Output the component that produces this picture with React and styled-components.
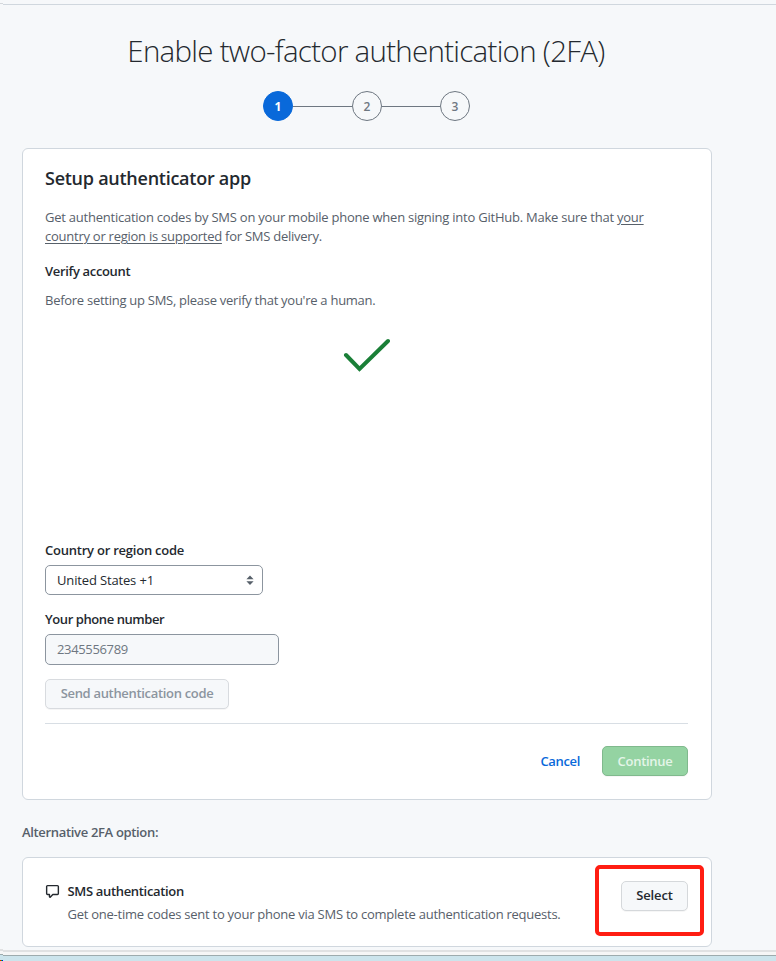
import React from 'react';
import styled, { createGlobalStyle } from 'styled-components';

const GlobalStyle = createGlobalStyle`
  *, *::before, *::after { box-sizing: border-box; }
  html, body { margin: 0; padding: 0; overflow: hidden; background: #f6f8fa; }
  body {
    font-family: "Open Sans", "Noto Sans", sans-serif;
    font-size: 13px;
    line-height: 19px;
    color: #24292f;
  }
  h1, h2, h3, p { margin: 0; }
  button, input { font-family: inherit; font-size: 13px; margin: 0; }
`;

const Page = styled.div`
  display: flex;
  flex-direction: column;
  width: 776px;
  height: 961px;
  overflow: hidden;
`;

const TopEdge = styled.div`
  display: flex;
  height: 5px;
  flex: none;
`;

const TopEdgeStub = styled.div`
  width: 3px;
  height: 4px;
  border-bottom: 1px solid #d4d8dc;
`;

const TopEdgeLine = styled.div`
  flex: 1;
  border-bottom: 1px solid #d0d7de;
`;

const Content = styled.main`
  display: flex;
  flex-direction: column;
  width: 690px;
  height: 942px;
  margin-left: 22px;
  flex: none;
`;

const Title = styled.h1`
  height: 44px;
  margin-top: 24px;
  padding-right: 2px;
  font-size: 29.5px;
  line-height: 44px;
  font-weight: 300;
  text-align: center;
  white-space: nowrap;
  letter-spacing: -0.72px;
`;

const Steps = styled.div`
  display: flex;
  align-items: center;
  justify-content: center;
  height: 30px;
  margin: 18px 0 27px;
  padding-right: 1px;
`;

const Step = styled.div`
  display: flex;
  align-items: center;
  justify-content: center;
  width: 30px;
  height: 30px;
  border-radius: 50%;
  border: 1px solid ${(p) => (p.$active ? '#0969da' : '#6e7781')};
  background: ${(p) => (p.$active ? '#0969da' : 'transparent')};
  color: ${(p) => (p.$active ? '#ffffff' : '#6e7781')};
  font-size: 12px;
  font-weight: ${(p) => (p.$active ? 700 : 600)};
`;

const StepLine = styled.div`
  width: ${(p) => p.$width}px;
  height: 1px;
  margin-top: 1px;
  background: #6e7781;
`;

const Card = styled.section`
  display: flex;
  flex-direction: column;
  height: 652px;
  flex: none;
  padding: 17px 23px 0 22px;
  border: 1px solid #d0d7de;
  border-radius: 6px;
  background: #ffffff;
`;

const CardTitle = styled.h2`
  height: 24px;
  font-size: 18px;
  line-height: 24px;
  font-weight: 600;
  letter-spacing: -0.26px;
`;

const Text = styled.p`
  color: #57606a;
  white-space: nowrap;
  margin-top: ${(p) => p.$top || 0}px;
  letter-spacing: ${(p) => p.$spacing || -0.25}px;
`;

const InlineLink = styled.span`
  text-decoration: underline;
  text-decoration-thickness: 1px;
  text-underline-offset: 2px;
`;

const Label = styled.h3`
  font-size: 13px;
  line-height: 19px;
  font-weight: 600;
  white-space: nowrap;
  margin-top: ${(p) => p.$top || 0}px;
  letter-spacing: ${(p) => p.$spacing || -0.33}px;
`;

const VerifyArea = styled.div`
  display: flex;
  justify-content: center;
  height: 203px;
  margin-top: 28px;
  padding-right: 1px;
`;

const CountrySelect = styled.div`
  display: flex;
  align-items: center;
  justify-content: space-between;
  width: 218px;
  height: 30px;
  margin-top: 5px;
  padding: 0 8px 0 11px;
  border: 1px solid #8c959f;
  border-radius: 5px;
  letter-spacing: -0.15px;
`;

const PhoneInput = styled.input`
  display: block;
  width: 234px;
  height: 31px;
  margin-top: 5px;
  padding: 0 11px 2px;
  border: 1px solid #8c959f;
  border-radius: 5px;
  background: #f6f8fa;
  color: #6e7781;
  letter-spacing: -0.35px;
  outline: none;
  &::placeholder { color: #6e7781; opacity: 1; }
`;

const palettes = {
  muted: ['#f6f8fa', '#d8dbdf', '#8c959f'],
  primary: ['#94d3a2', '#80b98d', '#e4f5e8'],
  plain: ['#f6f8fa', '#d5d8db', '#24292f'],
};

const Button = styled.button`
  display: flex;
  align-items: center;
  justify-content: center;
  width: ${(p) => p.$width}px;
  height: 30px;
  flex: none;
  padding: 0 0 ${(p) => p.$lift || 1}px;
  border: 1px solid ${(p) => palettes[p.$kind][1]};
  border-radius: 5px;
  background: ${(p) => palettes[p.$kind][0]};
  color: ${(p) => palettes[p.$kind][2]};
  font-weight: 600;
  line-height: 18px;
  white-space: nowrap;
  letter-spacing: ${(p) => p.$spacing || 0}px;
  box-shadow: 0 1px 0 rgba(27, 31, 36, 0.04);
`;

const SendRow = styled.div`
  display: flex;
  height: 45px;
  margin-top: 14px;
  border-bottom: 1px solid #d8dee4;
`;

const Actions = styled.div`
  display: flex;
  align-items: center;
  justify-content: flex-end;
  gap: 22px;
  height: 30px;
  margin-top: 22px;
`;

const Cancel = styled.span`
  color: #0969da;
  font-weight: 600;
  letter-spacing: -0.35px;
`;

const AltHeading = styled(Label)`
  color: #57606a;
  margin-top: 23px;
  margin-bottom: 15px;
`;

const OptionCard = styled.section`
  display: flex;
  position: relative;
  height: 90px;
  flex: none;
  padding: 23px 23px 0 22px;
  border: 1px solid #d0d7de;
  border-radius: 6px;
  background: #ffffff;
`;

const OptionIcon = styled.svg`
  width: 15px;
  height: 15px;
  margin: 3px 7.5px 0 0;
  flex: none;
`;

const OptionBody = styled.div`
  flex: 1;
  padding-top: 1px;
`;

const Highlight = styled.div`
  position: absolute;
  left: 572px;
  top: 7px;
  width: 109px;
  height: 71px;
  border: 4px solid #ff1d12;
  border-radius: 5px;
`;

const WindowEdge = styled.div`
  display: flex;
  height: 7px;
  flex: none;
  margin-top: auto;
  background: #cce4ec;
`;

const EdgeStub = styled.div`
  width: 3px;
  height: 6px;
  background: #f6f6f6;
  border-top: 2px solid #e0e1e2;
  border-bottom: 1px solid #9dabad;
`;

const EdgeBar = styled.div`
  flex: 1;
  background: #f6f6f6;
  border-top: 1px solid #f6f8fa;
  border-bottom: 1px solid #9dabad;
  box-shadow: inset 0 2px 0 #e0e1e2;
`;

const Desktop = styled.div`
  height: 5px;
  flex: none;
  background: #cce4ec;
  display: flex;
  align-items: flex-end;
`;

const Pixel = styled.i`
  width: 1px;
  height: 1px;
  background: ${(p) => p.$color};
`;

export default function App() {
  return (
    <>
      <GlobalStyle />
      <Page>
        <TopEdge>
          <TopEdgeStub />
          <TopEdgeLine />
        </TopEdge>
        <Content>
          <Title>Enable two-factor authentication (2FA)</Title>
          <Steps>
            <Step $active>1</Step>
            <StepLine $width={59} />
            <Step>2</Step>
            <StepLine $width={58} />
            <Step>3</Step>
          </Steps>
          <Card>
            <CardTitle>Setup authenticator app</CardTitle>
            <Text $top={18} $spacing={-0.235}>
              Get authentication codes by SMS on your mobile phone when signing into GitHub. Make sure that{' '}
              <InlineLink>your</InlineLink>
            </Text>
            <Text>
              <InlineLink>country or region is supported</InlineLink> for SMS delivery.
            </Text>
            <Label $top={16}>Verify account</Label>
            <Text $top={10} $spacing={-0.27}>Before setting up SMS, please verify that you're a human.</Text>
            <VerifyArea>
              <svg width="48" height="36" viewBox="0 0 48 36" fill="none">
                <path d="M4 17 17.5 31 46 3" stroke="#1a7f37" strokeWidth="4" strokeLinecap="round" />
              </svg>
            </VerifyArea>
            <Label $spacing={-0.23}>Country or region code</Label>
            <CountrySelect>
              <span>United States +1</span>
              <svg width="8" height="10" viewBox="0 0 8 10" fill="#57606a">
                <path d="M4 .5 7.6 4.2H.4zM4 10 .4 6.2h7.2z" />
              </svg>
            </CountrySelect>
            <Label $top={15} $spacing={-0.42}>Your phone number</Label>
            <PhoneInput placeholder="2345556789" />
            <SendRow>
              <Button $kind="muted" $width={184} $lift={2} $spacing={-0.32}>Send authentication code</Button>
            </SendRow>
            <Actions>
              <Cancel>Cancel</Cancel>
              <Button $kind="primary" $width={86} $spacing={-0.3}>Continue</Button>
            </Actions>
          </Card>
          <AltHeading>Alternative 2FA option:</AltHeading>
          <OptionCard>
            <OptionIcon viewBox="0 0 16 16" fill="#24292f">
              <path d="M2.75 2.5a.25.25 0 0 0-.25.25v7.5c0 .14.11.25.25.25h2a.75.75 0 0 1 .75.75v1.8l2.32-2.33a.75.75 0 0 1 .53-.22h4.9a.25.25 0 0 0 .25-.25v-7.5a.25.25 0 0 0-.25-.25H2.75ZM1 2.75C1 1.78 1.78 1 2.75 1h10.5c.97 0 1.75.78 1.75 1.75v7.5A1.75 1.75 0 0 1 13.25 12h-4.6l-2.57 2.57A1.25 1.25 0 0 1 4 13.7V12H2.75A1.75 1.75 0 0 1 1 10.25v-7.5Z" />
            </OptionIcon>
            <OptionBody>
              <Label>SMS authentication</Label>
              <Text $top={4}>Get one-time codes sent to your phone via SMS to complete authentication requests.</Text>
            </OptionBody>
            <Button $kind="plain" $width={67} $lift={2} $spacing={-0.15}>Select</Button>
            <Highlight />
          </OptionCard>
        </Content>
        <WindowEdge>
          <EdgeStub />
          <EdgeBar />
        </WindowEdge>
        <Desktop>
          <Pixel $color="#f00" />
          <Pixel $color="#0c0" />
          <Pixel $color="#00f" />
        </Desktop>
      </Page>
    </>
  );
}
